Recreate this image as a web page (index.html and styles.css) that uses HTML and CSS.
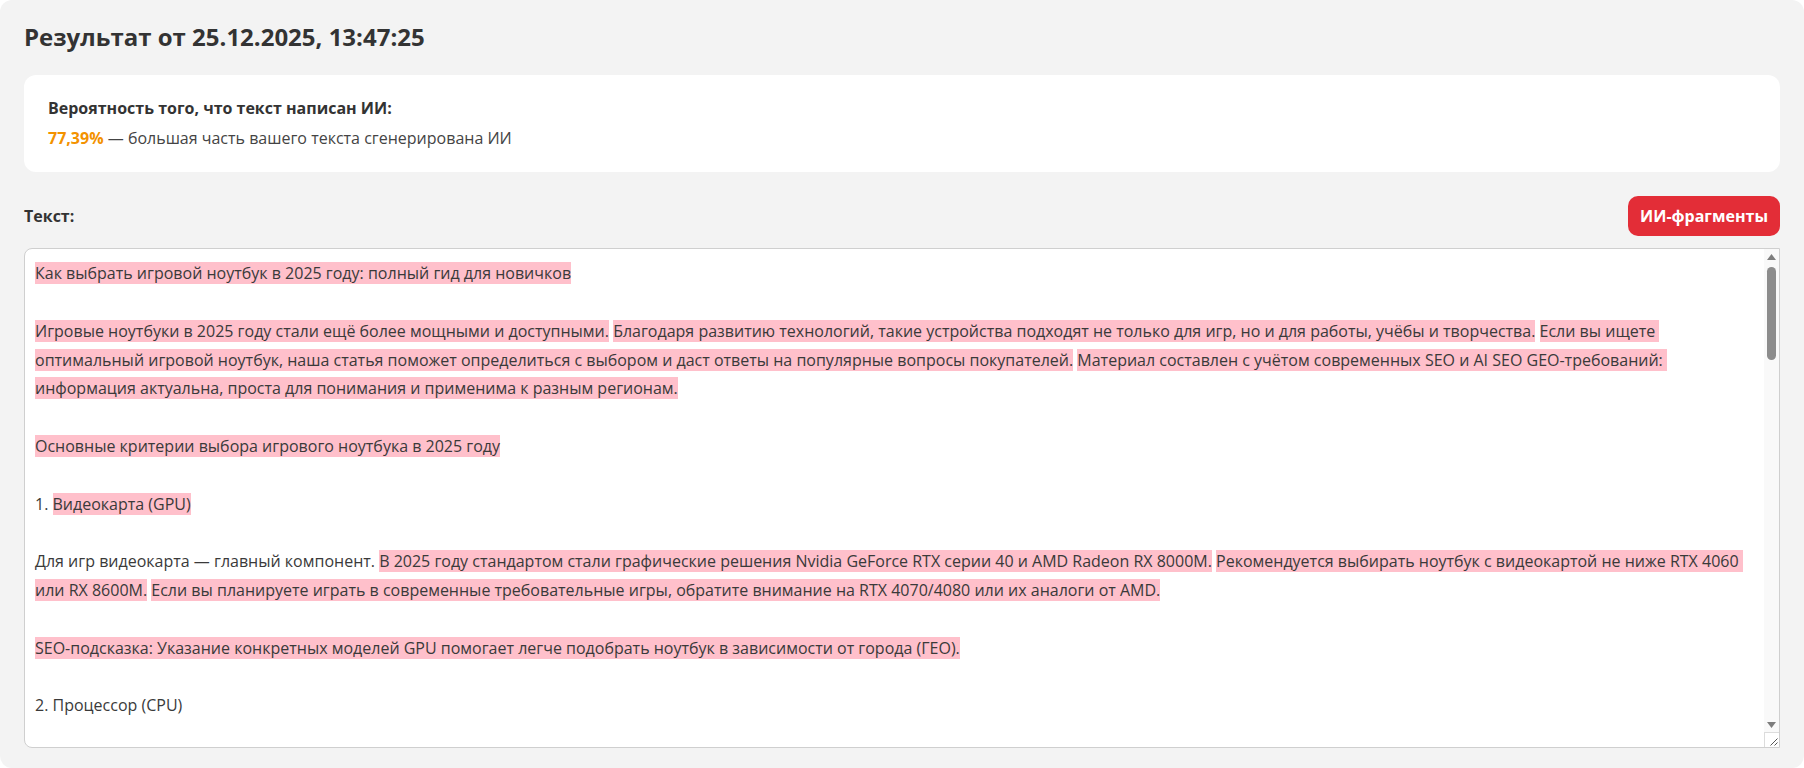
FILE: index.html
```html
<!DOCTYPE html>
<html lang="ru">
<head>
    <meta charset="UTF-8">
    <meta name="viewport" content="width=device-width, initial-scale=1.0">
    <title>Результат проверки текста</title>
    <link rel="stylesheet" href="styles.css">
</head>
<body>
    <div class="result">
        <h2 class="result-title">Результат от 25.12.2025, 13:47:25</h2>

        <div class="score-card">
            <div class="score-label">Вероятность того, что текст написан ИИ:</div>
            <div class="score-value"><span class="percent">77,39%</span> — большая часть вашего текста сгенерирована ИИ</div>
        </div>

        <div class="text-head">
            <span class="text-label">Текст:</span>
            <button class="ai-button">ИИ-фрагменты</button>
        </div>

        <div class="text-box">
            <!-- highlighted sentences are wrapped into .ai spans -->
            <div class="text-content" contenteditable="true" spellcheck="false"><span class="ai">Как выбрать игровой ноутбук в 2025 году: полный гид для новичков</span>

<span class="ai">Игровые ноутбуки в 2025 году стали ещё более мощными и доступными.</span> <span class="ai">Благодаря развитию технологий, такие устройства подходят не только для игр, но и для работы, учёбы и творчества.</span> <span class="ai">Если вы ищете оптимальный игровой ноутбук, наша статья поможет определиться с выбором и даст ответы на популярные вопросы покупателей.</span> <span class="ai">Материал составлен с учётом современных SEO и AI SEO GEO-требований: информация актуальна, проста для понимания и применима к разным регионам.</span>

<span class="ai">Основные критерии выбора игрового ноутбука в 2025 году</span>

1. <span class="ai">Видеокарта (GPU)</span>

Для игр видеокарта — главный компонент. <span class="ai">В 2025 году стандартом стали графические решения Nvidia GeForce RTX серии 40 и AMD Radeon RX 8000M.</span> <span class="ai">Рекомендуется выбирать ноутбук с видеокартой не ниже RTX 4060 или RX 8600M.</span> <span class="ai">Если вы планируете играть в современные требовательные игры, обратите внимание на RTX 4070/4080 или их аналоги от AMD.</span>

<span class="ai">SEO-подсказка: Указание конкретных моделей GPU помогает легче подобрать ноутбук в зависимости от города (ГЕО).</span>

2. Процессор (CPU)

<span class="ai">Оптимальный выбор — Intel Core i7 14-го поколения либо AMD Ryzen 7 серии 8000.</span>
</div>
            <!-- scrollbar drawn by hand so it looks the same everywhere -->
            <div class="scrollbar">
                <div class="sb-arrow"><svg width="9" height="6" viewBox="0 0 9 6"><path d="M4.5 0 L9 6 L0 6 Z" fill="#7d7d7d"/></svg></div>
                <div class="sb-track"><div class="sb-thumb"></div></div>
                <div class="sb-arrow"><svg width="9" height="6" viewBox="0 0 9 6"><path d="M0 0 L9 0 L4.5 6 Z" fill="#7d7d7d"/></svg></div>
                <div class="sb-corner"><svg width="14" height="14" viewBox="0 0 14 14"><path d="M12.5 5.5 L5.5 12.5 M12.5 9.5 L9.5 12.5" stroke="#555" stroke-width="1" fill="none"/></svg></div>
            </div>
        </div>
    </div>
</body>
</html>
```

FILE: styles.css
```css
* {
    margin: 0;
    padding: 0;
    box-sizing: border-box;
}
html, body {
    width: 100%;
    height: 100%;
    overflow: hidden;
}
body {
    background: #ffffff;
    font-family: "Open Sans", "Noto Sans", sans-serif;
    color: #333333;
}
/* Gray result panel */
.result {
    height: 768px;
    background-color: #f3f3f3;
    border-radius: 12px;
    padding: 20px 24px;
    display: flex;
    flex-direction: column;
}
.result-title {
    font-size: 24px;
    font-weight: 700;
    line-height: 33px;
    color: #333333;
    margin-bottom: 22px;
}
.score-card {
    background-color: #ffffff;
    border-radius: 12px;
    padding: 21px 24px;
    font-size: 16px;
    line-height: 1.6;
}
.score-label {
    font-weight: 700;
    color: #333333;
    margin-bottom: 4px;
}
.score-value {
    color: #444444;
}
.percent {
    color: #f39200;
    font-weight: 700;
}
.text-head {
    display: flex;
    justify-content: space-between;
    align-items: center;
    margin: 24px 0 12px;
}
.text-label {
    font-size: 16px;
    font-weight: 700;
    color: #333333;
}
.ai-button {
    height: 40px;
    padding: 0 12px;
    border: none;
    border-radius: 10px;
    background-color: #e32d37;
    color: #ffffff;
    font-family: "Open Sans", "Noto Sans", sans-serif;
    font-size: 16px;
    font-weight: 700;
    cursor: pointer;
}
/* Text area with highlighted fragments */
.text-box {
    height: 500px;
    display: flex;
    background-color: #ffffff;
    border: 1px solid #cfcfcf;
    border-radius: 8px 0 0 8px;
    overflow: hidden;
}
.text-content {
    flex: 1;
    padding: 10px;
    font-size: 16px;
    line-height: 1.8;
    color: #3a3a3a;
    white-space: pre-wrap;
    overflow-y: auto;
    scrollbar-width: none;
    outline: none;
}
.ai {
    background-color: #ffc0cb;
}
.scrollbar {
    width: 15px;
    display: flex;
    flex-direction: column;
    background-color: #f9f9f9;
}
.sb-arrow {
    height: 15px;
    display: flex;
    align-items: center;
    justify-content: center;
}
.sb-track {
    flex: 1;
    padding: 3px 3px 0;
}
.sb-thumb {
    height: 93px;
    border-radius: 5px;
    background-color: #8c8c8c;
}
.sb-corner {
    height: 15px;
    border-top: 1px solid #dcdcdc;
    border-left: 1px solid #dcdcdc;
    background-color: #ffffff;
}
.sb-corner svg {
    display: block;
}
```
